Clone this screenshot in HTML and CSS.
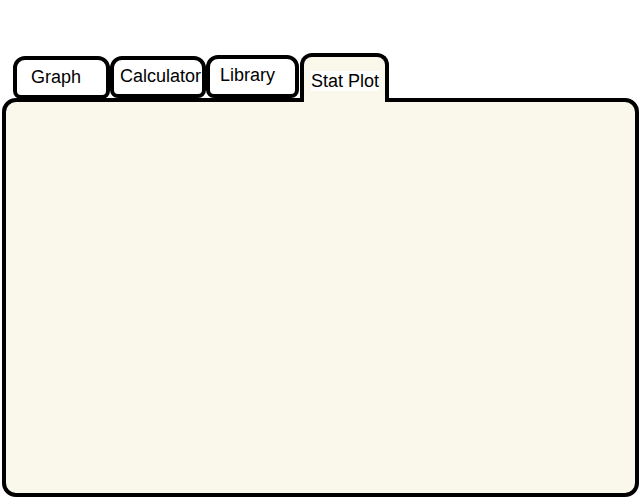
FILE: index.html
```html
<!DOCTYPE html>
<html>
<head>
<meta charset="utf-8">
<link rel="stylesheet" href="styles.css">
</head>
<body>
<div class="app">
  <div class="tabs">
    <div class="tab tab-graph"><span class="label">Graph</span></div>
    <div class="tab tab-calc"><span class="label">Calculator</span></div>
    <div class="tab tab-lib"><span class="label">Library</span></div>
    <div class="tab tab-stat active"><span class="label">Stat Plot</span></div>
  </div>
  <div class="panel"></div>
</div>
</body>
</html>
```
FILE: styles.css
```css
html, body {
  margin: 0;
  padding: 0;
  background: #ffffff;
}
.app {
  width: 641px;
  height: 499px;
  padding-top: 53px;
  box-sizing: border-box;
  font-family: "Liberation Sans", Arial, sans-serif;
}
.tabs {
  display: flex;
  align-items: flex-start;
  padding-left: 13px;
  height: 49px;
  margin-bottom: -4px;
  position: relative;
  z-index: 2;
}
.tab {
  box-sizing: border-box;
  border: 4px solid #000;
  border-radius: 12px 12px 8px 8px;
  background: #fff;
  overflow: hidden;
  white-space: nowrap;
  font-size: 18px;
  line-height: 21px;
  color: #000;
}
.tab-graph {
  width: 97px;
  height: 43px;
  margin-top: 3px;
  padding: 7px 0 0 14px;
}
.tab-calc {
  width: 96px;
  height: 42px;
  margin-top: 3px;
  padding: 6px 0 0 6px;
}
.tab-lib {
  width: 93px;
  height: 43px;
  margin-top: 2px;
  padding: 6px 0 0 10px;
}
.tab-stat {
  width: 89px;
  height: 49px;
  margin-left: 1px;
  border-bottom: none;
  border-radius: 12px 12px 0 0;
  background: #faf8ea;
  padding: 14px 0 0 7px;
}
.tab-stat .label {
  background: #fff;
}
.panel {
  margin-left: 2px;
  width: 637px;
  height: 399px;
  box-sizing: border-box;
  border: 4px solid #000;
  border-radius: 14px;
  background: #faf8ea;
  position: relative;
  z-index: 1;
}
```
